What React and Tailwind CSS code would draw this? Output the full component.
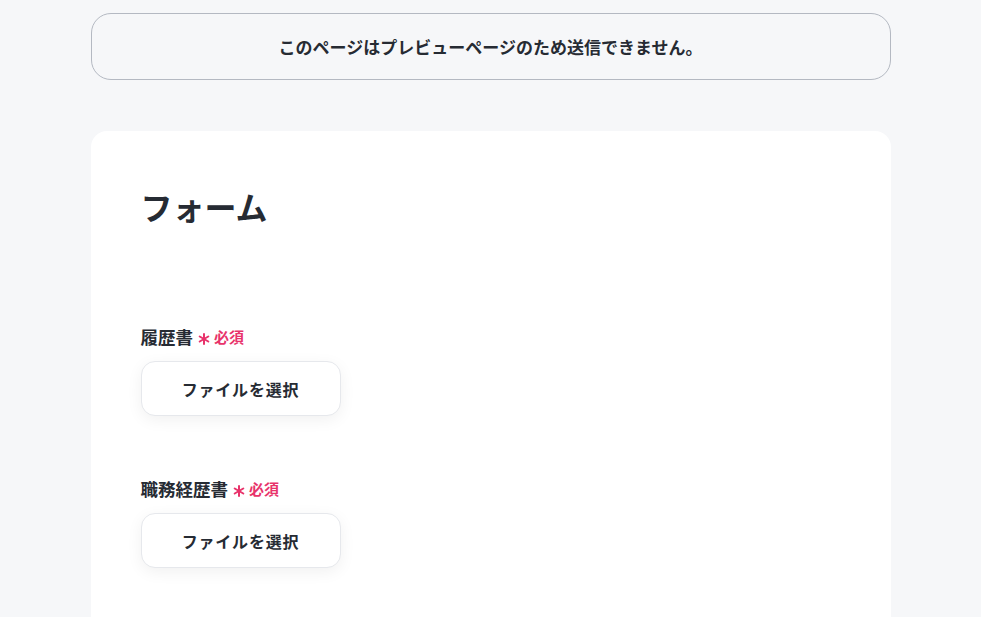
export default function App() {
  const font = { fontFamily: '"Noto Sans CJK JP", "Noto Sans", sans-serif' };
  const fields = ["履歴書", "職務経歴書"];
  return (
    <div className="min-h-[617px] bg-[#f6f7f9] text-[#262b33]" style={font}>
      <div className="mx-auto w-[800px] pt-[13px]">
        <div className="flex h-[67px] items-center justify-center rounded-[20px] border border-[#b4b9c2] bg-[#f6f7f9] text-[17px] font-bold">
          このページはプレビューページのため送信できません。
        </div>
        <div className="mt-[51px] min-h-[500px] rounded-t-[16px] bg-white px-[50px] pt-[51px]">
          <h1 className="text-[32px] leading-[48px] font-bold">フォーム</h1>
          <div className="mt-[95px] flex flex-col gap-[61px]">
            {fields.map((f) => (
              <div key={f} className="flex flex-col gap-[12px]">
                <div className="flex items-center text-[17.5px] leading-[24px] font-bold">
                  <span>{f}</span>
                  <span className="ml-[5px] flex items-center text-[#e8336b]">
                    <svg width="12" height="12" viewBox="0 0 12 12" className="mt-[3px]">
                      <g stroke="#e8336b" strokeWidth="2" strokeLinecap="round">
                        <line x1="6" y1="1" x2="6" y2="11" />
                        <line x1="1.7" y1="3.5" x2="10.3" y2="8.5" />
                        <line x1="1.7" y1="8.5" x2="10.3" y2="3.5" />
                      </g>
                    </svg>
                    <span className="ml-[4px] text-[15px]">必須</span>
                  </span>
                </div>
                <button className="flex h-[55px] w-[200px] items-center justify-center rounded-[14px] border border-[#e6e8ec] bg-white text-[16px] font-bold tracking-[0.05em] shadow-[0_4px_16px_rgba(0,0,0,0.06)]">
                  ファイルを選択
                </button>
              </div>
            ))}
          </div>
        </div>
      </div>
    </div>
  );
}
